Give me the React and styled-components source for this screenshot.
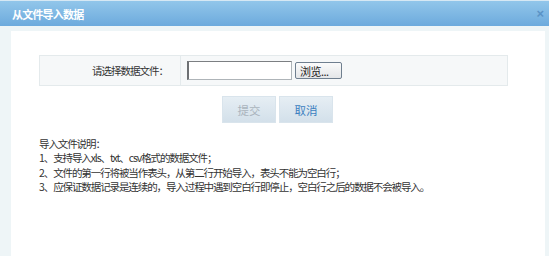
import React from 'react'
import styled, { createGlobalStyle } from 'styled-components'

const Global = createGlobalStyle`
  html, body { margin: 0; padding: 0; background: #eef5f7; }
  body { font-family: "Noto Sans CJK SC", "Liberation Sans", sans-serif; font-size: 12px; color: #333; }
`

const Dialog = styled.div`
  width: 549px;
  height: 256px;
  display: flex;
  flex-direction: column;
  background: #eef5f7;
  border-top: 1px solid #d6e8f4;
  box-sizing: border-box;
  overflow: hidden;
`

const Header = styled.div`
  height: 25px;
  flex: none;
  display: flex;
  align-items: center;
  justify-content: space-between;
  padding: 0 5px 0 12px;
  background: linear-gradient(#92c6ea, #6caadd);
  color: #fff;
  font-weight: bold;
  font-size: 11px;
  letter-spacing: -0.8px;
`

const Close = styled.span`
  color: #5a93c6;
  font-size: 13px;
  font-weight: bold;
  letter-spacing: 0;
  font-family: "Liberation Sans", sans-serif;
`

const Body = styled.div`
  flex: 1;
  padding: 5px 4px 0 11px;
  display: flex;
`

const Panel = styled.div`
  flex: 1;
  background: #fff;
  padding: 24px 37px 0 28px;
`

const Table = styled.div`
  display: grid;
  grid-template-columns: 141px 1fr;
  height: 31px;
  border: 1px solid #e4eaec;
  box-sizing: border-box;
  background: #f6f8f9;
`

const Label = styled.div`
  display: flex;
  align-items: center;
  justify-content: flex-end;
  padding-right: 12px;
  border-right: 1px solid #e4eaec;
  color: #333;
  font-size: 10.5px;
  letter-spacing: -1px;
`

const Field = styled.div`
  display: flex;
  align-items: center;
  padding-left: 6px;
  gap: 3px;
`

const FileInput = styled.div`
  width: 105px;
  height: 19px;
  box-sizing: border-box;
  background: #fff;
  border: 1px solid #aeb4b8;
  border-top-color: #7c7f82;
  border-left: 2px solid #6d7073;
`

const Browse = styled.div`
  width: 47px;
  height: 17px;
  box-sizing: border-box;
  border: 1px solid #6f7f8f;
  border-radius: 2px;
  background: linear-gradient(#fbfbfb, #e4e6e8);
  display: flex;
  align-items: center;
  padding-left: 4px;
  font-size: 11px;
  letter-spacing: -0.5px;
  color: #222;
`

const Actions = styled.div`
  display: flex;
  justify-content: center;
  gap: 3px;
  margin-top: 10px;
  padding-left: 8px;
`

const Btn = styled.div`
  width: 54px;
  height: 27px;
  display: flex;
  align-items: center;
  justify-content: center;
  background: linear-gradient(#e6eef4, #d3e0ea);
  border: 1px solid #d9e4ec;
  box-sizing: border-box;
  color: ${p => (p.disabled ? '#aab4bd' : '#3b7fc0')};
  font-size: 11.5px;
`

const Notes = styled.div`
  margin-top: 14px;
  line-height: 14.3px;
  font-size: 10.5px;
  letter-spacing: -1.1px;
  color: #333;
  white-space: nowrap;
`

export default function App() {
  return (
    <>
      <Global />
      <Dialog>
        <Header>
          <span>从文件导入数据</span>
          <Close>×</Close>
        </Header>
        <Body>
          <Panel>
            <Table>
              <Label>请选择数据文件：</Label>
              <Field>
                <FileInput />
                <Browse>浏览...</Browse>
              </Field>
            </Table>
            <Actions>
              <Btn disabled>提交</Btn>
              <Btn>取消</Btn>
            </Actions>
            <Notes>
              <div>导入文件说明：</div>
              <div>1、支持导入xls、txt、csv格式的数据文件；</div>
              <div>2、文件的第一行将被当作表头，从第二行开始导入，表头不能为空白行；</div>
              <div>3、应保证数据记录是连续的，导入过程中遇到空白行即停止，空白行之后的数据不会被导入。</div>
            </Notes>
          </Panel>
        </Body>
      </Dialog>
    </>
  )
}
